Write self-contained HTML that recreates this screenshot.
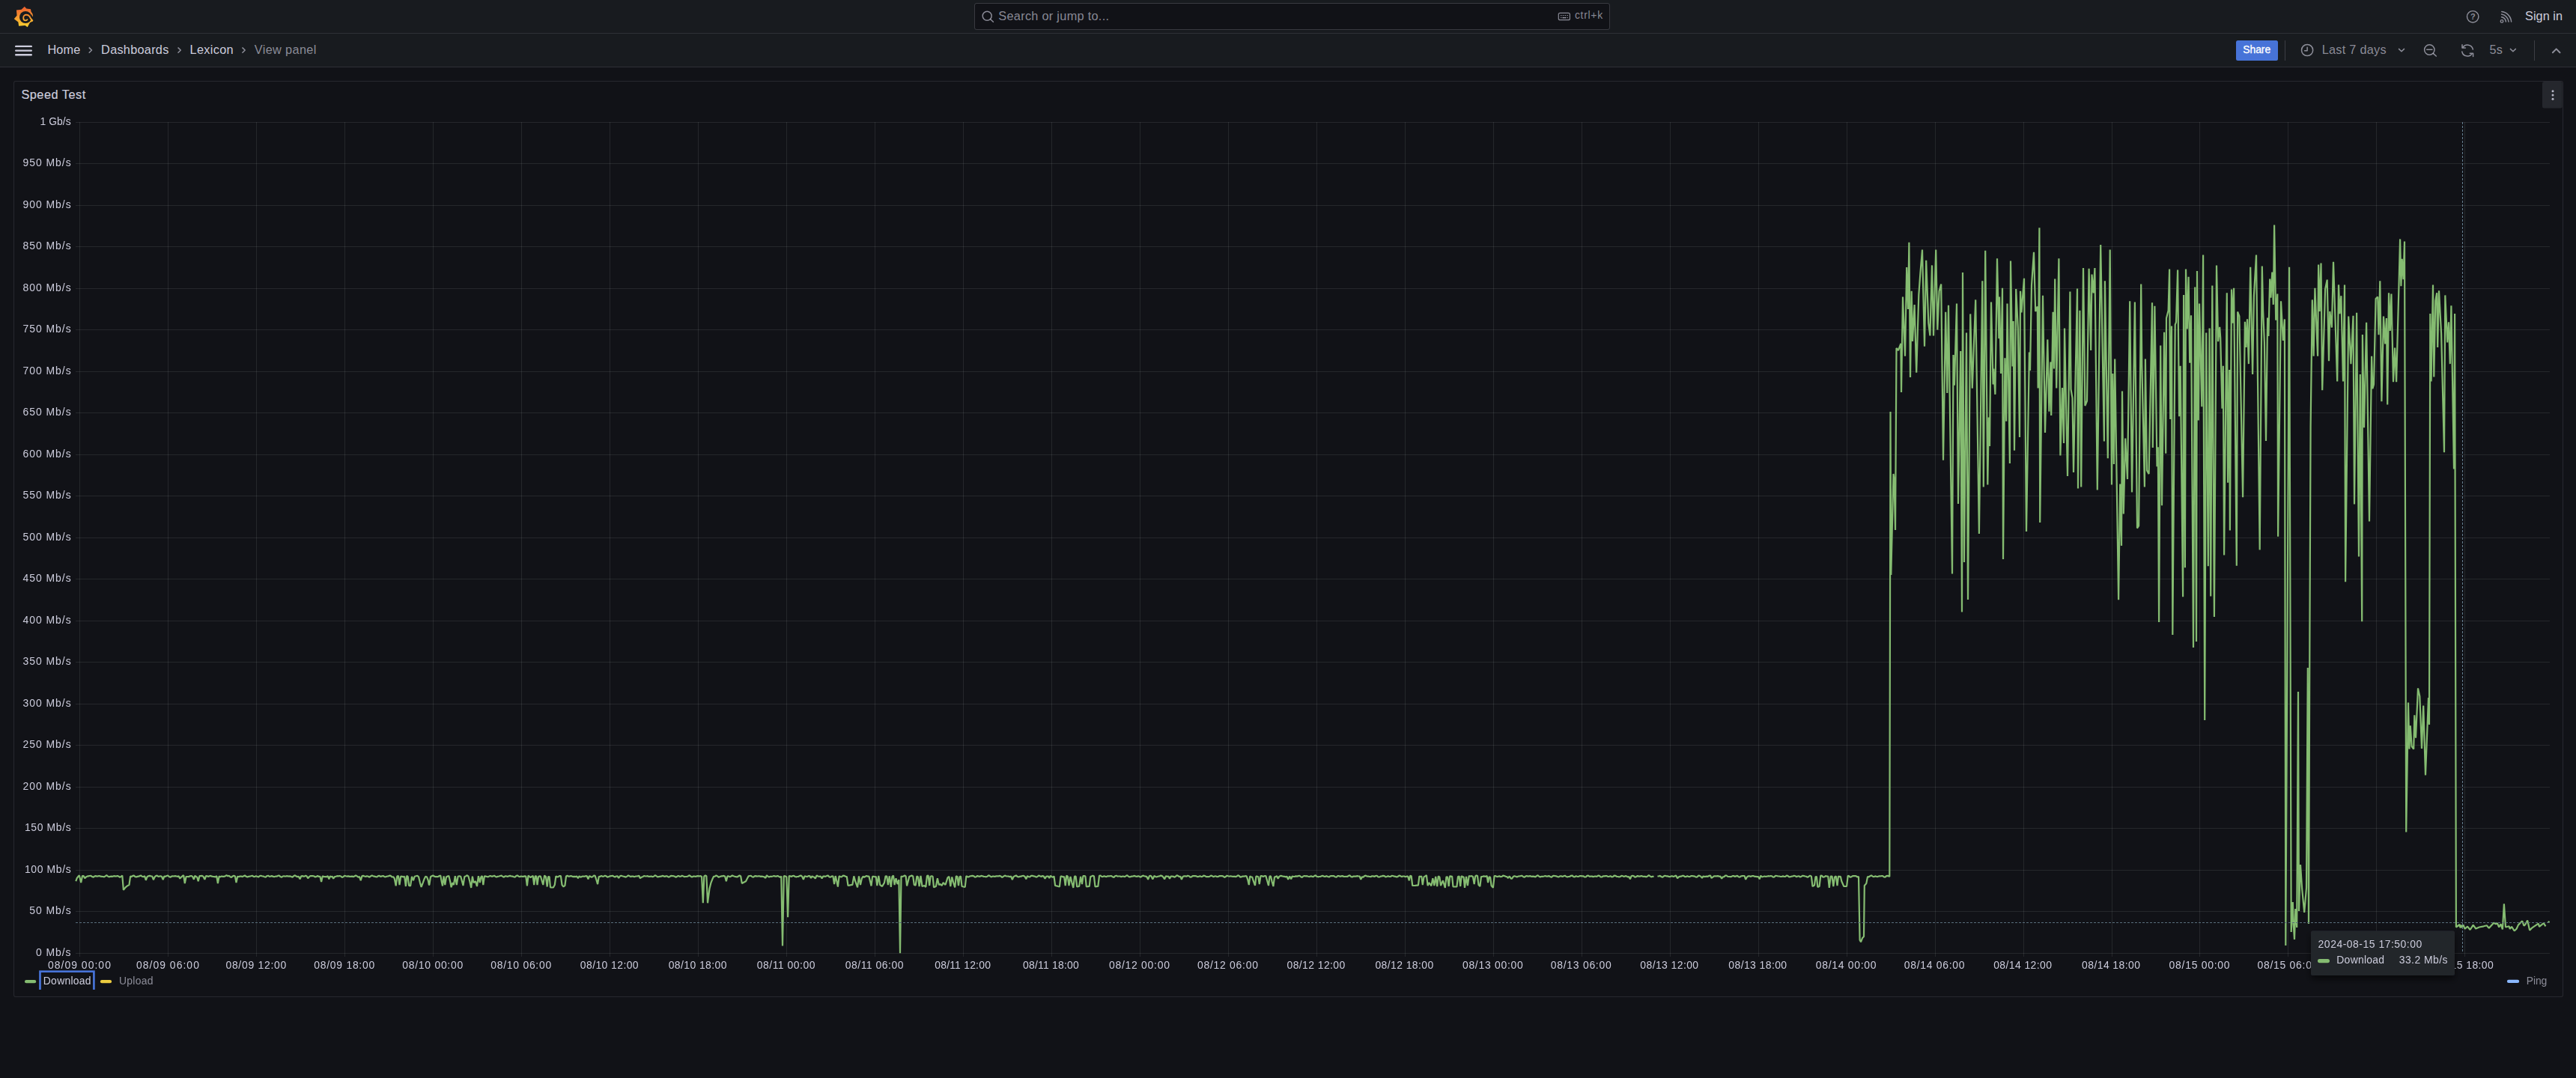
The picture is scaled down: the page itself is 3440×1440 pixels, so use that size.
<!DOCTYPE html>
<html lang="en">
<head>
<meta charset="utf-8">
<title>Lexicon - Dashboards - Grafana</title>
<style>
html,body{margin:0;padding:0}
body{width:3440px;height:1440px;overflow:hidden;background:#111217;position:relative;font-family:"Liberation Sans",sans-serif;color:rgb(204,204,220)}
header,nav{position:absolute;left:0;width:3440px;height:44px;background:#181b1f;border-bottom:1px solid rgba(204,204,220,0.12);box-sizing:content-box}
header{top:0}
nav{top:45px}
main{position:absolute;left:18px;top:108px;width:3403px;height:1222px;border:1px solid rgba(204,204,220,0.12);border-radius:3px;background:#111217}
svg{position:absolute;left:0;top:0}
svg text{font-family:"Liberation Sans",sans-serif;white-space:pre}
</style>
</head>
<body>
<header></header>
<nav></nav>
<main></main>
<svg width="3440" height="1440" viewBox="0 0 3440 1440">
<path d="M106.5 163V1278M224.5 163V1278M342.5 163V1278M460.5 163V1278M578.5 163V1278M696.5 163V1278M814.5 163V1278M932.5 163V1278M1050.5 163V1278M1168.5 163V1278M1286.5 163V1278M1404.5 163V1278M1522.5 163V1278M1640.5 163V1278M1758.5 163V1278M1876.5 163V1278M1994.5 163V1278M2112.5 163V1278M2230.5 163V1278M2348.5 163V1278M2466.5 163V1278M2584.5 163V1278M2702.5 163V1278M2820.5 163V1278M2937.5 163V1278M3055.5 163V1278M3173.5 163V1278M3291.5 163V1278" stroke="rgba(240,250,255,0.09)" stroke-width="1" fill="none" shape-rendering="crispEdges"/>
<path d="M101.0 163.5H3404.5M101.0 218.5H3404.5M101.0 274.5H3404.5M101.0 329.5H3404.5M101.0 385.5H3404.5M101.0 440.5H3404.5M101.0 496.5H3404.5M101.0 551.5H3404.5M101.0 607.5H3404.5M101.0 662.5H3404.5M101.0 718.5H3404.5M101.0 773.5H3404.5M101.0 829.5H3404.5M101.0 884.5H3404.5M101.0 940.5H3404.5M101.0 995.5H3404.5M101.0 1051.5H3404.5M101.0 1106.5H3404.5M101.0 1162.5H3404.5M101.0 1217.5H3404.5M101.0 1273.5H3404.5" stroke="rgba(240,250,255,0.09)" stroke-width="1" fill="none" shape-rendering="crispEdges"/>
<g class="ax" opacity="0.999"><text x="53.6" y="167.2" font-size="13.95" fill="rgb(204,204,220)" textLength="41.0" lengthAdjust="spacing">1 Gb/s</text><text x="30.6" y="222.2" font-size="13.95" fill="rgb(204,204,220)" textLength="64.0" lengthAdjust="spacing">950 Mb/s</text><text x="30.6" y="278.2" font-size="13.95" fill="rgb(204,204,220)" textLength="64.0" lengthAdjust="spacing">900 Mb/s</text><text x="30.6" y="333.2" font-size="13.95" fill="rgb(204,204,220)" textLength="64.0" lengthAdjust="spacing">850 Mb/s</text><text x="30.6" y="389.2" font-size="13.95" fill="rgb(204,204,220)" textLength="64.0" lengthAdjust="spacing">800 Mb/s</text><text x="30.6" y="444.2" font-size="13.95" fill="rgb(204,204,220)" textLength="64.0" lengthAdjust="spacing">750 Mb/s</text><text x="30.6" y="500.2" font-size="13.95" fill="rgb(204,204,220)" textLength="64.0" lengthAdjust="spacing">700 Mb/s</text><text x="30.6" y="555.2" font-size="13.95" fill="rgb(204,204,220)" textLength="64.0" lengthAdjust="spacing">650 Mb/s</text><text x="30.6" y="611.2" font-size="13.95" fill="rgb(204,204,220)" textLength="64.0" lengthAdjust="spacing">600 Mb/s</text><text x="30.6" y="666.2" font-size="13.95" fill="rgb(204,204,220)" textLength="64.0" lengthAdjust="spacing">550 Mb/s</text><text x="30.6" y="722.2" font-size="13.95" fill="rgb(204,204,220)" textLength="64.0" lengthAdjust="spacing">500 Mb/s</text><text x="30.6" y="777.2" font-size="13.95" fill="rgb(204,204,220)" textLength="64.0" lengthAdjust="spacing">450 Mb/s</text><text x="30.6" y="833.2" font-size="13.95" fill="rgb(204,204,220)" textLength="64.0" lengthAdjust="spacing">400 Mb/s</text><text x="30.6" y="888.2" font-size="13.95" fill="rgb(204,204,220)" textLength="64.0" lengthAdjust="spacing">350 Mb/s</text><text x="30.6" y="944.2" font-size="13.95" fill="rgb(204,204,220)" textLength="64.0" lengthAdjust="spacing">300 Mb/s</text><text x="30.6" y="999.2" font-size="13.95" fill="rgb(204,204,220)" textLength="64.0" lengthAdjust="spacing">250 Mb/s</text><text x="30.6" y="1055.2" font-size="13.95" fill="rgb(204,204,220)" textLength="64.0" lengthAdjust="spacing">200 Mb/s</text><text x="33.0" y="1110.2" font-size="13.95" fill="rgb(204,204,220)" textLength="61.6" lengthAdjust="spacing">150 Mb/s</text><text x="33.0" y="1166.2" font-size="13.95" fill="rgb(204,204,220)" textLength="61.6" lengthAdjust="spacing">100 Mb/s</text><text x="39.3" y="1221.2" font-size="13.95" fill="rgb(204,204,220)" textLength="55.3" lengthAdjust="spacing">50 Mb/s</text><text x="47.9" y="1277.2" font-size="13.95" fill="rgb(204,204,220)" textLength="46.6" lengthAdjust="spacing">0 Mb/s</text></g>
<g class="ax" opacity="0.999"><text x="63.9" y="1294.0" font-size="13.95" fill="rgb(204,204,220)" textLength="84.0" lengthAdjust="spacing">08/09 00:00</text><text x="181.9" y="1294.0" font-size="13.95" fill="rgb(204,204,220)" textLength="84.0" lengthAdjust="spacing">08/09 06:00</text><text x="301.4" y="1294.0" font-size="13.95" fill="rgb(204,204,220)" textLength="80.9" lengthAdjust="spacing">08/09 12:00</text><text x="419.3" y="1294.0" font-size="13.95" fill="rgb(204,204,220)" textLength="80.9" lengthAdjust="spacing">08/09 18:00</text><text x="537.3" y="1294.0" font-size="13.95" fill="rgb(204,204,220)" textLength="80.9" lengthAdjust="spacing">08/10 00:00</text><text x="655.3" y="1294.0" font-size="13.95" fill="rgb(204,204,220)" textLength="80.9" lengthAdjust="spacing">08/10 06:00</text><text x="774.8" y="1294.0" font-size="13.95" fill="rgb(204,204,220)" textLength="77.8" lengthAdjust="spacing">08/10 12:00</text><text x="892.7" y="1294.0" font-size="13.95" fill="rgb(204,204,220)" textLength="77.8" lengthAdjust="spacing">08/10 18:00</text><text x="1010.7" y="1294.0" font-size="13.95" fill="rgb(204,204,220)" textLength="77.8" lengthAdjust="spacing">08/11 00:00</text><text x="1128.7" y="1294.0" font-size="13.95" fill="rgb(204,204,220)" textLength="77.8" lengthAdjust="spacing">08/11 06:00</text><text x="1248.2" y="1294.0" font-size="13.95" fill="rgb(204,204,220)" textLength="74.7" lengthAdjust="spacing">08/11 12:00</text><text x="1366.1" y="1294.0" font-size="13.95" fill="rgb(204,204,220)" textLength="74.7" lengthAdjust="spacing">08/11 18:00</text><text x="1481.0" y="1294.0" font-size="13.95" fill="rgb(204,204,220)" textLength="80.9" lengthAdjust="spacing">08/12 00:00</text><text x="1599.0" y="1294.0" font-size="13.95" fill="rgb(204,204,220)" textLength="80.9" lengthAdjust="spacing">08/12 06:00</text><text x="1718.5" y="1294.0" font-size="13.95" fill="rgb(204,204,220)" textLength="77.8" lengthAdjust="spacing">08/12 12:00</text><text x="1836.4" y="1294.0" font-size="13.95" fill="rgb(204,204,220)" textLength="77.8" lengthAdjust="spacing">08/12 18:00</text><text x="1952.9" y="1294.0" font-size="13.95" fill="rgb(204,204,220)" textLength="80.9" lengthAdjust="spacing">08/13 00:00</text><text x="2070.8" y="1294.0" font-size="13.95" fill="rgb(204,204,220)" textLength="80.9" lengthAdjust="spacing">08/13 06:00</text><text x="2190.3" y="1294.0" font-size="13.95" fill="rgb(204,204,220)" textLength="77.8" lengthAdjust="spacing">08/13 12:00</text><text x="2308.3" y="1294.0" font-size="13.95" fill="rgb(204,204,220)" textLength="77.8" lengthAdjust="spacing">08/13 18:00</text><text x="2424.7" y="1294.0" font-size="13.95" fill="rgb(204,204,220)" textLength="80.9" lengthAdjust="spacing">08/14 00:00</text><text x="2542.7" y="1294.0" font-size="13.95" fill="rgb(204,204,220)" textLength="80.9" lengthAdjust="spacing">08/14 06:00</text><text x="2662.2" y="1294.0" font-size="13.95" fill="rgb(204,204,220)" textLength="77.8" lengthAdjust="spacing">08/14 12:00</text><text x="2780.1" y="1294.0" font-size="13.95" fill="rgb(204,204,220)" textLength="77.8" lengthAdjust="spacing">08/14 18:00</text><text x="2896.6" y="1294.0" font-size="13.95" fill="rgb(204,204,220)" textLength="80.9" lengthAdjust="spacing">08/15 00:00</text><text x="3014.5" y="1294.0" font-size="13.95" fill="rgb(204,204,220)" textLength="80.9" lengthAdjust="spacing">08/15 06:00</text><text x="3134.0" y="1294.0" font-size="13.95" fill="rgb(204,204,220)" textLength="77.8" lengthAdjust="spacing">08/15 12:00</text><text x="3252.0" y="1294.0" font-size="13.95" fill="rgb(204,204,220)" textLength="77.8" lengthAdjust="spacing">08/15 18:00</text></g>
<g fill="none" stroke="#85bc71" stroke-width="2.2" stroke-linejoin="bevel" stroke-linecap="butt"><path d="M101.3 1177.2 L102.8 1172.9 L104.4 1170.8 L105.9 1169.4 L108.2 1179.1 L110.0 1170.0 L111.6 1170.0 L113.3 1173.3 L114.9 1171.5 L116.5 1170.6 L118.1 1170.3 L119.7 1170.0 L121.4 1169.8 L123.0 1171.1 L124.6 1171.8 L126.2 1170.5 L127.8 1170.1 L129.4 1170.8 L131.0 1170.4 L132.7 1170.0 L134.3 1170.7 L135.9 1170.8 L137.5 1171.0 L139.1 1171.4 L140.7 1170.3 L142.3 1169.2 L143.9 1170.5 L145.6 1171.4 L147.2 1170.8 L148.8 1170.7 L150.4 1170.8 L152.0 1170.2 L153.6 1170.4 L155.2 1170.6 L156.9 1169.9 L158.5 1170.7 L160.1 1171.9 L161.7 1170.9 L163.3 1169.7 L164.9 1188.8 L167.6 1185.3 L170.0 1183.4 L172.5 1182.0 L174.1 1170.6 L175.7 1171.1 L177.3 1169.9 L178.9 1169.7 L180.5 1171.1 L182.1 1171.4 L183.7 1170.9 L185.2 1170.7 L186.8 1169.9 L188.4 1169.7 L190.0 1171.0 L191.6 1171.2 L193.2 1170.3 L194.8 1175.8 L196.5 1171.3 L198.2 1170.3 L199.9 1169.9 L201.5 1170.3 L203.2 1170.5 L204.9 1175.2 L206.5 1171.6 L208.1 1170.0 L209.7 1169.7 L211.3 1170.8 L212.9 1170.7 L214.5 1170.3 L216.1 1171.0 L217.7 1175.2 L219.3 1170.7 L221.0 1170.8 L222.6 1170.0 L224.2 1169.5 L225.8 1171.0 L227.5 1171.8 L229.1 1170.6 L230.7 1170.3 L232.3 1170.5 L233.9 1170.1 L235.6 1170.5 L237.2 1170.9 L238.8 1170.4 L240.4 1173.7 L242.0 1171.6 L243.6 1170.3 L245.2 1169.3 L246.8 1180.1 L248.6 1171.0 L250.3 1171.0 L252.0 1171.2 L253.7 1170.3 L255.4 1170.0 L257.1 1170.9 L258.9 1174.8 L260.3 1169.9 L261.8 1171.0 L263.2 1171.7 L264.7 1177.2 L266.4 1170.2 L268.2 1170.1 L269.9 1169.9 L271.7 1171.2 L273.4 1174.8 L275.0 1170.2 L276.6 1170.3 L278.2 1171.0 L279.8 1170.3 L281.4 1169.9 L283.0 1170.7 L284.5 1171.0 L286.1 1171.1 L287.7 1171.3 L289.3 1170.2 L290.9 1180.1 L292.6 1170.6 L294.2 1171.4 L295.9 1170.5 L297.5 1170.8 L299.2 1170.9 L300.9 1170.3 L302.5 1169.0 L304.2 1170.3 L305.8 1169.9 L307.4 1171.2 L309.0 1171.9 L310.7 1170.4 L312.3 1169.7 L313.9 1170.4 L315.5 1179.1 L317.2 1170.7 L318.8 1171.2 L320.4 1170.6 L322.1 1170.5 L323.7 1171.1 L325.4 1170.2 L327.0 1169.4 L328.6 1170.8 L330.3 1171.6 L331.9 1170.9 L333.5 1170.7 L335.2 1170.2 L336.8 1169.8 L338.4 1170.8 L340.1 1171.1 L341.7 1170.2 L343.3 1170.8 L345.0 1171.5 L346.6 1170.3 L348.2 1169.7 L349.9 1170.3 L351.5 1170.5 L353.1 1171.2 L354.8 1171.6 L356.4 1170.2 L358.1 1169.7 L359.7 1170.8 L361.3 1170.6 L363.0 1170.1 L364.6 1170.9 L366.2 1171.2 L367.9 1170.7 L369.5 1170.7 L371.1 1169.9 L372.8 1169.5 L374.4 1171.1 L376.0 1171.8 L377.7 1170.5 L379.3 1170.3 L380.9 1170.7 L382.6 1170.2 L384.2 1170.4 L385.8 1170.7 L387.5 1170.4 L389.1 1171.1 L390.7 1171.6 L392.4 1170.0 L394.0 1169.4 L395.7 1170.6 L397.3 1171.1 L398.9 1170.9 L400.6 1174.3 L402.1 1170.5 L403.6 1170.1 L405.1 1170.7 L406.7 1170.6 L408.2 1169.8 L409.7 1170.5 L411.2 1173.3 L412.9 1171.2 L414.5 1170.1 L416.1 1170.1 L417.7 1170.0 L419.4 1170.5 L421.0 1171.5 L422.6 1170.9 L424.2 1170.1 L425.8 1170.9 L427.5 1170.9 L429.1 1178.1 L430.8 1170.2 L432.5 1171.1 L434.2 1171.1 L435.9 1171.3 L437.7 1170.3 L439.4 1174.3 L440.8 1170.4 L442.3 1171.3 L443.7 1170.7 L445.2 1173.7 L446.9 1171.1 L448.5 1170.8 L450.2 1170.2 L451.8 1170.3 L453.5 1170.0 L455.2 1170.5 L456.8 1171.9 L458.5 1171.2 L460.1 1169.7 L461.8 1170.2 L463.4 1170.6 L465.1 1170.4 L466.8 1170.9 L468.4 1170.9 L470.1 1170.6 L471.7 1171.1 L473.4 1170.5 L475.1 1169.3 L476.7 1170.4 L478.4 1171.7 L480.0 1171.0 L481.7 1176.2 L483.4 1170.4 L485.0 1169.9 L486.7 1170.5 L488.4 1171.0 L490.0 1170.2 L491.7 1170.8 L493.4 1171.7 L495.0 1170.4 L496.7 1169.6 L498.4 1170.3 L500.0 1170.6 L501.7 1171.2 L503.4 1171.5 L505.0 1170.2 L506.7 1169.9 L508.4 1171.0 L510.0 1170.4 L511.7 1170.0 L513.4 1171.1 L515.0 1171.3 L516.7 1170.7 L518.4 1170.5 L520.1 1169.7 L521.7 1169.9 L523.4 1171.5 L525.1 1171.3 L526.7 1173.3 L528.7 1183.4 L530.3 1170.6 L531.9 1170.0 L533.5 1182.0 L535.2 1170.6 L536.9 1170.8 L538.5 1171.6 L540.2 1170.8 L541.9 1184.0 L543.3 1169.9 L544.7 1171.0 L546.1 1183.0 L548.1 1183.4 L550.0 1170.9 L552.0 1176.2 L553.7 1170.7 L555.5 1170.3 L557.3 1169.8 L559.1 1171.4 L560.9 1179.1 L562.6 1184.9 L564.8 1179.1 L566.5 1174.3 L568.3 1170.7 L570.0 1171.4 L571.8 1176.2 L572.9 1182.0 L573.3 1182.0 L575.0 1171.3 L576.6 1170.3 L578.3 1169.5 L580.0 1170.6 L581.7 1171.2 L583.3 1171.1 L585.0 1171.1 L586.7 1170.0 L588.3 1169.7 L590.0 1179.1 L591.0 1183.4 L592.6 1170.4 L594.3 1182.0 L596.0 1171.4 L597.7 1170.6 L599.4 1170.1 L601.1 1177.2 L602.6 1185.3 L604.4 1179.1 L605.9 1182.0 L607.8 1170.2 L609.8 1182.0 L611.6 1170.8 L613.4 1170.2 L615.2 1170.7 L617.0 1177.2 L618.5 1183.0 L620.3 1171.1 L622.0 1170.4 L623.8 1169.3 L625.5 1170.7 L627.3 1177.2 L629.2 1185.9 L630.9 1170.6 L632.5 1179.1 L635.0 1177.2 L637.0 1184.0 L638.9 1170.2 L640.8 1179.1 L642.3 1171.6 L643.8 1170.1 L645.3 1182.0 L646.9 1170.4 L648.6 1170.7 L650.2 1171.0 L651.8 1171.4 L653.5 1170.4 L655.1 1170.0 L656.7 1170.9 L658.3 1170.4 L660.0 1169.7 L661.6 1170.9 L663.2 1171.6 L664.8 1170.8 L666.5 1170.5 L668.1 1170.0 L669.7 1169.7 L671.4 1171.0 L673.0 1171.6 L674.6 1170.4 L676.2 1170.4 L677.9 1171.1 L679.5 1170.3 L681.1 1169.9 L682.8 1170.5 L684.4 1170.6 L686.0 1171.2 L687.6 1171.6 L689.3 1170.1 L690.9 1169.4 L692.5 1170.7 L694.2 1171.1 L695.8 1170.5 L697.4 1170.9 L699.0 1170.9 L700.7 1170.4 L702.3 1170.6 L703.9 1183.4 L705.5 1169.7 L707.0 1170.9 L708.6 1172.0 L710.1 1170.9 L711.7 1170.0 L713.2 1182.0 L714.7 1170.3 L716.1 1170.3 L717.5 1182.0 L719.0 1171.1 L720.4 1170.4 L721.9 1170.6 L723.3 1175.2 L725.3 1182.0 L727.1 1169.5 L728.9 1171.0 L730.7 1184.5 L732.1 1171.0 L733.6 1171.0 L735.0 1185.5 L736.9 1185.5 L738.9 1185.5 L740.8 1182.0 L742.4 1170.3 L744.0 1171.5 L745.7 1171.1 L747.3 1170.0 L748.9 1170.1 L750.5 1182.0 L752.5 1184.5 L754.4 1183.0 L756.0 1170.6 L757.6 1169.8 L759.2 1170.7 L760.7 1170.7 L762.3 1170.0 L763.9 1170.6 L765.5 1171.1 L767.1 1170.9 L768.7 1171.1 L770.3 1170.5 L771.9 1173.3 L773.6 1170.2 L775.3 1171.7 L777.0 1170.9 L778.7 1170.5 L780.4 1170.8 L782.1 1170.2 L783.8 1170.3 L785.5 1174.3 L787.0 1170.2 L788.5 1170.8 L790.0 1171.8 L791.6 1171.0 L793.1 1169.5 L794.6 1169.9 L796.1 1174.3 L798.1 1181.1 L799.7 1171.2 L801.4 1170.9 L803.0 1170.1 L804.7 1170.8 L806.3 1170.7 L808.0 1169.6 L809.7 1170.5 L811.3 1171.7 L813.0 1171.0 L814.6 1170.4 L816.3 1170.2 L817.9 1169.7 L819.6 1170.7 L821.2 1171.5 L822.9 1170.5 L824.6 1170.4 L826.2 1172.9 L827.8 1170.5 L829.4 1169.7 L831.0 1170.3 L832.6 1170.7 L834.2 1171.1 L835.8 1171.6 L837.4 1170.6 L839.0 1169.4 L840.6 1170.3 L842.2 1171.1 L843.8 1170.5 L845.4 1170.6 L847.0 1171.2 L848.6 1170.7 L850.2 1170.5 L851.7 1170.4 L853.3 1169.7 L854.9 1173.3 L856.6 1171.8 L858.2 1171.3 L859.9 1170.0 L861.5 1170.3 L863.2 1170.5 L864.8 1170.2 L866.4 1170.9 L868.1 1170.8 L869.7 1170.5 L871.4 1171.3 L873.0 1170.8 L874.7 1169.3 L876.3 1170.0 L878.0 1171.3 L879.6 1171.1 L881.2 1170.9 L882.9 1170.7 L884.5 1169.9 L886.2 1170.4 L887.8 1171.0 L889.5 1170.2 L891.1 1170.5 L892.8 1171.7 L894.4 1171.0 L896.0 1169.9 L897.7 1170.1 L899.3 1170.2 L901.0 1170.8 L902.6 1171.7 L904.3 1170.8 L905.9 1169.9 L907.6 1170.8 L909.2 1170.7 L910.8 1169.8 L912.5 1170.5 L914.1 1171.2 L915.8 1171.0 L917.4 1171.0 L919.1 1170.3 L920.7 1169.3 L922.3 1170.5 L924.0 1171.6 L925.6 1170.7 L927.3 1170.5 L928.9 1171.0 L930.6 1170.4 L932.2 1170.2 L933.9 1170.5 L935.5 1170.2 L937.1 1171.0 L938.8 1206.3 L940.3 1170.6 L941.9 1169.4 L943.4 1170.2 L945.0 1206.3 L947.5 1186.9 L949.5 1179.1 L951.4 1174.3 L953.1 1170.8 L954.8 1170.6 L956.4 1169.5 L958.1 1170.4 L959.8 1171.8 L961.5 1171.1 L963.1 1170.4 L964.8 1170.3 L966.5 1169.9 L968.2 1170.7 L969.8 1177.2 L971.5 1170.4 L973.1 1170.5 L974.7 1171.4 L976.3 1170.5 L977.9 1169.5 L979.5 1170.3 L981.1 1170.8 L982.7 1171.1 L984.4 1171.5 L986.0 1170.5 L987.6 1169.5 L989.2 1170.5 L990.8 1180.1 L993.1 1178.7 L996.0 1177.2 L998.0 1173.3 L999.6 1170.4 L1001.2 1170.0 L1002.8 1169.8 L1004.5 1171.3 L1006.1 1171.8 L1007.7 1170.3 L1009.3 1170.1 L1010.9 1170.7 L1012.5 1170.3 L1014.2 1170.3 L1015.8 1170.9 L1017.4 1170.7 L1019.0 1171.0 L1020.6 1171.4 L1022.3 1172.9 L1023.9 1169.3 L1025.5 1170.7 L1027.1 1171.4 L1028.7 1170.8 L1030.4 1170.9 L1032.0 1170.5 L1033.6 1170.0 L1035.2 1170.6 L1036.9 1170.6 L1038.5 1170.0 L1040.1 1170.9 L1041.7 1171.8 L1043.3 1170.6 L1045.0 1263.5 L1046.8 1170.2 L1048.6 1170.4 L1050.3 1171.2 L1052.1 1225.3 L1053.7 1170.1 L1055.3 1170.4 L1056.9 1171.0 L1058.5 1170.0 L1060.1 1169.8 L1061.7 1171.0 L1063.3 1171.3 L1064.9 1171.0 L1066.5 1170.8 L1068.1 1169.9 L1069.7 1169.6 L1071.3 1171.0 L1072.9 1174.8 L1074.6 1170.3 L1076.3 1170.7 L1078.0 1171.1 L1079.6 1170.2 L1081.3 1170.1 L1083.0 1172.9 L1084.5 1170.4 L1085.9 1171.2 L1087.4 1171.8 L1088.8 1173.7 L1090.6 1169.4 L1092.3 1170.5 L1094.1 1170.8 L1095.8 1170.5 L1097.6 1173.3 L1099.2 1170.7 L1100.9 1170.6 L1102.5 1170.9 L1104.2 1169.9 L1105.8 1169.6 L1107.5 1171.4 L1109.1 1171.7 L1110.8 1170.5 L1112.4 1170.3 L1114.1 1181.1 L1115.7 1170.1 L1117.4 1177.2 L1118.9 1184.5 L1120.6 1170.3 L1122.3 1171.2 L1124.0 1171.3 L1125.7 1169.7 L1127.4 1169.8 L1129.1 1170.8 L1130.8 1171.0 L1132.5 1183.0 L1134.4 1182.6 L1136.4 1182.2 L1138.3 1182.0 L1140.3 1170.4 L1142.2 1177.2 L1145.1 1185.3 L1147.0 1170.4 L1149.0 1182.0 L1150.9 1173.3 L1152.5 1170.8 L1154.1 1171.8 L1155.7 1170.8 L1157.3 1170.0 L1158.8 1170.7 L1160.4 1170.6 L1162.0 1177.2 L1163.5 1183.4 L1165.1 1170.9 L1166.7 1170.8 L1168.2 1171.3 L1169.8 1171.0 L1171.3 1183.0 L1173.3 1169.9 L1175.2 1182.0 L1178.1 1184.0 L1181.0 1179.1 L1182.6 1170.2 L1184.3 1170.6 L1185.9 1182.0 L1187.8 1170.3 L1189.8 1184.9 L1191.4 1171.1 L1193.0 1169.7 L1194.6 1182.0 L1196.5 1173.3 L1198.5 1181.1 L1200.4 1175.2 L1202.0 1273.3 L1203.5 1170.4 L1205.0 1171.1 L1206.5 1170.4 L1208.1 1169.5 L1209.6 1170.5 L1211.1 1183.4 L1212.7 1177.2 L1214.3 1170.8 L1215.9 1170.4 L1217.5 1169.6 L1219.2 1170.4 L1220.8 1182.0 L1222.7 1182.6 L1224.4 1170.5 L1226.0 1171.4 L1227.6 1184.0 L1229.5 1169.9 L1231.5 1184.0 L1234.4 1183.0 L1236.3 1184.9 L1238.0 1169.9 L1239.6 1169.7 L1241.2 1183.0 L1242.6 1170.7 L1244.1 1170.3 L1245.6 1170.8 L1247.0 1185.3 L1249.9 1184.0 L1251.9 1173.3 L1253.8 1182.0 L1255.7 1181.1 L1257.7 1183.0 L1259.6 1179.1 L1262.5 1182.0 L1265.5 1172.3 L1267.4 1170.8 L1269.3 1184.0 L1271.3 1171.5 L1273.2 1179.1 L1275.2 1185.3 L1276.8 1170.4 L1278.4 1171.0 L1280.0 1183.0 L1281.5 1171.2 L1283.0 1170.6 L1284.5 1184.0 L1286.6 1184.5 L1288.7 1184.9 L1290.4 1170.0 L1292.1 1171.4 L1293.7 1171.4 L1295.4 1170.3 L1297.0 1170.2 L1298.7 1169.9 L1300.4 1170.3 L1302.0 1171.6 L1303.7 1171.2 L1305.3 1170.0 L1307.0 1170.7 L1308.7 1170.8 L1310.3 1169.9 L1312.0 1170.3 L1313.6 1170.9 L1315.3 1171.0 L1317.0 1171.3 L1318.6 1170.7 L1320.3 1169.3 L1321.9 1170.2 L1323.6 1171.4 L1325.3 1170.7 L1326.9 1170.6 L1328.6 1171.0 L1330.2 1170.4 L1331.9 1170.3 L1333.6 1170.4 L1335.2 1169.9 L1336.9 1170.8 L1338.5 1172.0 L1340.2 1170.7 L1341.9 1169.6 L1343.5 1170.3 L1345.2 1170.5 L1346.8 1170.6 L1348.5 1171.2 L1350.2 1170.6 L1351.8 1175.2 L1353.5 1171.1 L1355.2 1170.2 L1356.9 1169.4 L1358.5 1170.9 L1360.2 1171.5 L1361.9 1170.9 L1363.6 1170.7 L1365.2 1170.0 L1366.9 1169.9 L1368.6 1171.0 L1370.3 1174.3 L1371.9 1170.2 L1373.6 1171.2 L1375.3 1171.3 L1377.0 1169.9 L1378.7 1169.9 L1380.4 1170.4 L1382.0 1170.7 L1383.7 1171.6 L1385.4 1171.0 L1387.1 1169.6 L1388.8 1170.3 L1390.5 1170.9 L1392.1 1170.1 L1393.8 1170.6 L1395.5 1173.7 L1397.0 1170.9 L1398.4 1170.7 L1399.9 1170.6 L1401.3 1172.9 L1402.9 1169.7 L1404.4 1171.3 L1406.0 1171.7 L1407.5 1170.5 L1409.1 1183.0 L1411.0 1183.4 L1413.0 1184.0 L1414.9 1184.5 L1416.5 1170.6 L1418.0 1170.6 L1419.6 1171.5 L1421.1 1171.2 L1422.7 1183.0 L1424.3 1169.6 L1425.9 1170.9 L1427.5 1183.0 L1429.5 1171.0 L1431.4 1179.1 L1433.3 1185.9 L1435.0 1170.7 L1436.6 1170.6 L1438.2 1184.5 L1441.1 1184.0 L1443.1 1170.9 L1445.0 1181.1 L1446.4 1170.1 L1447.9 1170.0 L1449.4 1170.6 L1450.8 1184.5 L1452.8 1184.2 L1454.7 1184.0 L1456.2 1171.1 L1457.8 1170.5 L1459.4 1169.6 L1460.9 1170.4 L1462.5 1184.5 L1464.4 1184.2 L1466.3 1184.0 L1468.0 1169.9 L1469.6 1169.5 L1471.2 1171.0 L1472.8 1171.1 L1474.5 1170.3 L1476.1 1170.9 L1477.7 1171.1 L1479.3 1170.3 L1481.0 1170.3 L1482.6 1170.2 L1484.2 1170.0 L1485.8 1171.3 L1487.5 1171.9 L1489.1 1170.3 L1490.7 1169.7 L1492.3 1170.6 L1493.9 1170.5 L1495.6 1170.5 L1497.2 1171.1 L1498.8 1170.7 L1500.4 1170.7 L1502.1 1171.1 L1503.7 1170.1 L1505.3 1169.3 L1506.9 1170.8 L1508.6 1171.6 L1510.2 1170.9 L1511.8 1170.6 L1513.4 1170.4 L1515.1 1169.9 L1516.7 1170.7 L1518.3 1171.0 L1519.9 1170.2 L1521.5 1170.8 L1523.2 1171.7 L1524.8 1170.5 L1526.4 1169.6 L1528.0 1170.2 L1529.7 1170.6 L1531.3 1171.1 L1532.9 1174.3 L1533.3 1174.3 L1534.8 1170.3 L1536.2 1169.8 L1537.7 1170.7 L1539.1 1174.3 L1539.7 1173.7 L1541.4 1169.9 L1543.2 1171.1 L1544.9 1171.3 L1546.6 1170.7 L1548.3 1170.5 L1550.1 1169.6 L1551.8 1170.1 L1553.5 1171.7 L1555.2 1174.3 L1556.9 1170.2 L1558.6 1170.8 L1560.3 1170.5 L1562.0 1173.7 L1563.6 1170.5 L1565.2 1170.6 L1566.8 1170.8 L1568.4 1171.7 L1570.0 1170.8 L1571.6 1169.3 L1573.2 1170.0 L1574.8 1171.1 L1576.4 1170.8 L1577.9 1174.8 L1579.6 1171.0 L1581.2 1170.4 L1582.8 1170.4 L1584.5 1170.7 L1586.1 1169.8 L1587.8 1170.2 L1589.4 1171.8 L1591.0 1171.4 L1592.7 1170.1 L1594.3 1170.1 L1595.9 1170.2 L1597.6 1170.4 L1599.2 1171.3 L1600.8 1170.9 L1602.5 1170.2 L1604.1 1171.1 L1605.7 1170.9 L1607.4 1169.6 L1609.0 1170.0 L1610.7 1171.1 L1612.3 1171.1 L1613.9 1171.2 L1615.6 1170.7 L1617.2 1169.6 L1618.8 1170.2 L1620.5 1171.3 L1622.1 1170.5 L1623.7 1170.4 L1625.4 1171.3 L1627.0 1170.9 L1628.6 1170.1 L1630.3 1170.2 L1631.9 1170.0 L1633.5 1170.6 L1635.2 1171.9 L1636.8 1171.1 L1638.5 1169.7 L1640.1 1170.3 L1641.7 1170.7 L1643.4 1170.2 L1645.0 1170.7 L1646.6 1171.0 L1648.3 1170.7 L1649.9 1171.1 L1651.5 1170.6 L1653.2 1169.3 L1654.8 1170.1 L1656.4 1171.6 L1658.1 1171.1 L1659.7 1170.5 L1661.4 1170.6 L1663.0 1170.2 L1664.6 1170.3 L1666.3 1175.2 L1667.8 1182.0 L1669.3 1170.3 L1670.7 1171.5 L1672.2 1171.6 L1673.6 1176.2 L1676.0 1183.0 L1677.4 1170.6 L1678.9 1170.7 L1680.3 1171.2 L1681.8 1181.1 L1683.5 1170.2 L1685.2 1170.2 L1686.9 1171.0 L1688.6 1170.1 L1690.4 1170.0 L1692.1 1176.2 L1694.0 1183.0 L1695.5 1170.6 L1697.0 1170.4 L1698.5 1177.2 L1700.4 1184.0 L1702.0 1171.6 L1703.5 1171.1 L1705.1 1170.2 L1706.6 1173.7 L1708.3 1170.9 L1710.0 1169.9 L1711.7 1170.2 L1713.4 1170.6 L1715.1 1170.8 L1716.8 1171.6 L1718.5 1170.8 L1720.2 1174.8 L1722.2 1170.5 L1724.1 1174.3 L1725.7 1170.5 L1727.4 1171.0 L1729.0 1170.9 L1730.6 1170.4 L1732.3 1170.6 L1733.9 1170.1 L1735.5 1169.7 L1737.2 1171.2 L1738.8 1171.9 L1740.4 1170.5 L1742.1 1170.0 L1743.7 1170.4 L1745.3 1170.2 L1747.0 1170.7 L1748.6 1171.1 L1750.3 1170.4 L1751.9 1170.7 L1753.5 1171.3 L1755.2 1170.0 L1756.8 1169.4 L1758.4 1170.8 L1760.1 1171.3 L1761.7 1171.0 L1763.3 1171.0 L1765.0 1170.1 L1766.6 1169.8 L1768.2 1170.9 L1769.9 1170.9 L1771.5 1170.1 L1773.1 1171.0 L1774.8 1171.5 L1776.4 1170.4 L1778.0 1170.0 L1779.7 1170.1 L1781.3 1170.2 L1782.9 1171.3 L1784.6 1171.7 L1786.2 1170.2 L1787.8 1170.0 L1789.5 1170.9 L1791.1 1170.4 L1792.7 1170.1 L1794.4 1170.9 L1796.0 1171.0 L1797.7 1170.9 L1799.3 1171.0 L1800.9 1169.8 L1802.6 1169.4 L1804.2 1171.1 L1805.8 1171.5 L1807.5 1170.5 L1809.1 1170.6 L1810.7 1170.7 L1812.4 1170.1 L1814.0 1170.5 L1815.6 1170.5 L1817.3 1174.8 L1818.9 1171.3 L1820.6 1171.7 L1822.2 1170.0 L1823.9 1169.6 L1825.5 1170.6 L1827.2 1170.7 L1828.8 1171.0 L1830.5 1171.2 L1832.1 1170.3 L1833.8 1170.4 L1835.4 1171.0 L1837.1 1170.0 L1838.7 1169.8 L1840.4 1171.4 L1842.1 1171.5 L1843.7 1170.6 L1845.4 1170.4 L1847.0 1169.9 L1848.7 1170.1 L1850.3 1171.4 L1852.0 1171.0 L1853.6 1170.2 L1855.3 1171.0 L1856.9 1171.0 L1858.6 1169.8 L1860.2 1170.0 L1861.9 1170.7 L1863.5 1170.9 L1865.2 1171.5 L1866.8 1170.9 L1868.5 1169.5 L1870.1 1170.1 L1871.8 1171.1 L1873.4 1170.5 L1875.1 1170.5 L1876.8 1171.2 L1878.4 1170.7 L1880.1 1170.5 L1881.7 1176.2 L1883.2 1169.7 L1884.7 1170.2 L1886.2 1183.0 L1888.1 1183.0 L1890.1 1182.8 L1892.0 1182.6 L1893.9 1182.6 L1895.4 1170.5 L1896.8 1171.0 L1898.3 1170.7 L1899.8 1182.0 L1901.5 1171.4 L1903.2 1170.5 L1904.9 1169.2 L1906.6 1183.0 L1908.5 1179.1 L1911.4 1183.4 L1913.3 1173.3 L1915.3 1183.0 L1917.2 1171.0 L1919.2 1184.0 L1920.8 1170.3 L1922.4 1171.6 L1924.0 1183.0 L1926.9 1176.2 L1929.8 1185.9 L1931.5 1171.2 L1933.1 1171.6 L1934.7 1184.0 L1936.2 1170.0 L1937.6 1170.9 L1939.1 1170.7 L1940.5 1184.5 L1942.5 1184.5 L1945.4 1184.5 L1947.0 1171.0 L1948.6 1170.5 L1950.2 1184.0 L1951.7 1170.0 L1953.1 1171.5 L1954.6 1171.3 L1956.0 1185.9 L1958.0 1170.8 L1959.9 1183.0 L1961.7 1170.1 L1963.4 1170.5 L1965.2 1170.2 L1966.9 1171.0 L1968.7 1181.1 L1970.1 1170.6 L1971.6 1169.4 L1973.0 1170.0 L1974.5 1182.0 L1976.4 1184.0 L1978.0 1171.0 L1979.5 1171.0 L1981.0 1170.4 L1982.5 1170.6 L1984.1 1170.9 L1985.6 1169.9 L1987.1 1179.1 L1988.6 1171.2 L1990.1 1171.8 L1991.6 1183.0 L1993.9 1185.9 L1995.6 1170.0 L1997.2 1170.1 L1998.9 1171.2 L2000.6 1170.9 L2002.2 1170.2 L2003.9 1171.2 L2005.6 1171.0 L2007.2 1169.6 L2008.9 1170.0 L2010.6 1170.8 L2012.2 1171.0 L2013.9 1172.9 L2015.8 1170.5 L2017.8 1173.7 L2019.1 1173.7 L2020.8 1171.0 L2022.4 1170.2 L2024.1 1170.7 L2025.7 1171.4 L2027.3 1170.7 L2029.0 1170.4 L2030.6 1170.1 L2032.3 1169.7 L2033.9 1171.0 L2035.6 1171.9 L2037.2 1170.6 L2038.9 1170.0 L2040.5 1170.7 L2042.1 1170.4 L2043.8 1170.2 L2045.4 1170.9 L2047.1 1170.7 L2048.7 1170.9 L2050.4 1171.4 L2052.0 1170.1 L2053.6 1169.2 L2055.3 1170.7 L2056.9 1171.4 L2058.6 1170.8 L2060.2 1170.9 L2061.9 1170.5 L2063.5 1170.0 L2065.2 1170.7 L2066.8 1170.6 L2068.4 1170.0 L2070.1 1171.1 L2071.7 1171.8 L2073.4 1170.4 L2075.0 1169.8 L2076.7 1170.2 L2078.3 1170.4 L2079.9 1171.1 L2081.6 1171.4 L2083.2 1170.3 L2084.9 1170.3 L2086.5 1171.1 L2088.2 1170.2 L2089.8 1169.7 L2091.5 1171.0 L2093.1 1171.3 L2094.7 1171.0 L2096.4 1170.8 L2098.0 1169.8 L2099.7 1169.6 L2101.3 1171.2 L2103.0 1171.3 L2104.6 1170.3 L2106.2 1170.8 L2107.9 1171.0 L2109.5 1170.1 L2111.2 1170.1 L2112.8 1170.4 L2114.5 1170.4 L2116.1 1171.5 L2117.8 1171.5 L2119.4 1169.8 L2121.0 1169.7 L2122.7 1170.8 L2124.3 1170.6 L2126.0 1170.6 L2127.6 1171.1 L2129.3 1170.7 L2130.9 1170.6 L2132.5 1170.8 L2134.2 1169.7 L2135.8 1169.8 L2137.5 1171.5 L2139.1 1171.5 L2140.8 1170.4 L2142.4 1170.4 L2144.1 1170.2 L2145.7 1170.1 L2147.3 1171.0 L2149.0 1170.8 L2150.6 1170.3 L2152.3 1171.3 L2153.9 1171.2 L2155.6 1169.6 L2157.2 1169.8 L2158.8 1170.8 L2160.5 1171.0 L2162.1 1171.3 L2163.8 1171.0 L2165.4 1169.8 L2167.1 1170.2 L2168.7 1171.1 L2170.4 1170.2 L2172.0 1170.3 L2173.6 1171.4 L2175.3 1171.1 L2176.9 1174.3 L2178.6 1170.2 L2180.2 1169.8 L2181.9 1170.4 L2183.6 1171.8 L2185.2 1171.0 L2186.9 1170.0 L2188.5 1170.7 L2190.2 1170.6 L2191.9 1170.0 L2193.5 1170.6 L2195.2 1170.9 L2196.8 1170.9 L2198.5 1171.4 L2200.2 1170.5 L2201.8 1169.2 L2203.5 1170.4 L2205.1 1171.4 L2206.8 1170.8 L2208.5 1170.8"/><path d="M2213.4 1170.5 L2215.1 1170.5 L2216.8 1169.9 L2218.4 1171.0 L2220.1 1171.9 L2221.7 1170.5 L2223.4 1169.7 L2225.1 1170.3 L2226.7 1170.4 L2228.4 1170.9 L2230.0 1171.3 L2231.7 1170.4 L2233.4 1170.4 L2235.0 1171.1 L2236.7 1170.1 L2238.3 1169.6 L2240.0 1173.3 L2241.7 1171.4 L2243.3 1170.9 L2245.0 1170.7 L2246.6 1169.9 L2248.3 1169.8 L2249.9 1171.2 L2251.6 1171.1 L2253.2 1170.2 L2254.9 1171.0 L2256.5 1171.2 L2258.2 1170.1 L2259.8 1170.0 L2261.5 1170.3 L2263.1 1170.6 L2264.8 1171.6 L2266.4 1171.4 L2268.1 1169.7 L2269.7 1169.9 L2271.4 1170.9 L2273.0 1172.9 L2274.6 1170.4 L2276.2 1171.1 L2277.7 1170.9 L2279.3 1170.7 L2280.9 1170.8 L2282.5 1169.8 L2284.0 1169.6 L2285.6 1172.9 L2287.3 1171.7 L2289.0 1170.4 L2290.7 1170.4 L2292.4 1170.4 L2294.1 1170.1 L2295.8 1170.8 L2297.5 1170.7 L2299.2 1173.7 L2300.8 1171.4 L2302.4 1171.2 L2304.0 1169.6 L2305.6 1169.7 L2307.2 1170.8 L2308.8 1171.0 L2310.4 1171.1 L2312.0 1171.1 L2313.6 1170.1 L2315.2 1170.1 L2316.8 1170.9 L2318.4 1170.4 L2320.0 1169.9 L2321.6 1171.2 L2323.2 1171.6 L2324.8 1170.5 L2326.4 1170.2 L2328.0 1170.0 L2329.6 1170.0 L2331.2 1174.8 L2332.9 1171.6 L2334.6 1170.3 L2336.3 1170.3 L2337.9 1171.0 L2339.6 1170.1 L2341.3 1170.0 L2343.0 1170.8 L2344.6 1170.9 L2346.3 1171.2 L2348.0 1171.0 L2349.7 1174.3 L2351.3 1169.7 L2353.0 1171.3 L2354.6 1171.0 L2356.3 1170.5 L2357.9 1171.0 L2359.6 1170.7 L2361.2 1170.2 L2362.9 1170.5 L2364.5 1170.0 L2366.1 1170.3 L2367.8 1171.8 L2369.4 1171.4 L2371.1 1169.8 L2372.7 1170.0 L2374.4 1170.5 L2376.0 1170.5 L2377.7 1171.0 L2379.3 1171.0 L2381.0 1170.4 L2382.6 1171.0 L2384.3 1170.8 L2385.9 1169.5 L2387.6 1170.1 L2389.2 1171.5 L2390.9 1171.2 L2392.5 1170.7 L2394.2 1170.5 L2395.8 1169.8 L2397.5 1170.3 L2399.1 1171.2 L2400.7 1170.5 L2402.4 1170.4 L2404.0 1171.5 L2405.7 1170.8 L2407.3 1169.7 L2409.0 1170.1 L2410.6 1170.5 L2412.3 1170.9 L2413.9 1171.7 L2415.6 1170.7 L2417.2 1169.6 L2418.9 1170.6 L2420.5 1184.0 L2423.0 1182.6 L2424.5 1171.1 L2425.9 1171.2 L2427.3 1184.9 L2429.6 1184.0 L2431.3 1169.6 L2432.9 1169.9 L2434.6 1171.6 L2436.2 1171.4 L2437.9 1170.2 L2439.5 1170.5 L2441.2 1170.5 L2442.8 1185.9 L2444.7 1170.7 L2446.5 1170.5 L2448.3 1184.0 L2450.0 1171.7 L2451.8 1170.3 L2453.5 1183.0 L2455.0 1170.4 L2456.4 1171.1 L2457.9 1170.9 L2459.3 1177.2 L2462.3 1184.0 L2464.2 1184.0 L2466.1 1184.0 L2467.7 1169.8 L2469.3 1170.4 L2470.9 1171.8 L2472.5 1171.2 L2474.1 1170.1 L2475.7 1170.1 L2477.3 1170.0 L2478.8 1170.4 L2480.4 1171.5 L2482.0 1171.1 L2483.6 1255.8 L2485.0 1258.3 L2487.1 1252.9 L2489.0 1250.9 L2489.8 1183.0 L2492.3 1180.1 L2494.0 1171.1 L2495.7 1171.3 L2497.4 1170.3 L2499.0 1169.4 L2500.7 1170.7 L2502.4 1171.3 L2504.1 1170.4 L2505.7 1170.8 L2507.4 1171.1 L2509.1 1170.4 L2510.7 1170.3 L2512.4 1170.2 L2514.1 1170.0 L2515.8 1171.4 L2517.4 1171.8 L2519.1 1170.1 L2520.8 1169.8 L2522.5 1170.6 L2523.3 1171.0 L2524.5 550.0 L2525.3 768.0 L2528.5 633.0 L2529.5 640.0 L2531.0 708.0 L2532.5 465.0 L2535.0 468.0 L2538.4 459.0 L2539.0 524.0 L2541.0 396.5 L2544.0 475.7 L2546.2 357.0 L2548.0 413.0 L2549.4 323.8 L2551.0 504.0 L2552.7 388.7 L2554.0 456.0 L2556.6 407.0 L2559.2 497.8 L2562.3 394.0 L2564.4 365.0 L2567.0 333.6 L2570.0 462.7 L2572.2 347.7 L2575.3 431.6 L2577.4 448.4 L2580.0 354.4 L2582.0 448.4 L2585.2 333.6 L2587.3 440.6 L2589.6 388.7 L2592.2 379.6 L2595.0 614.7 L2598.2 416.8 L2600.3 525.0 L2602.0 407.7 L2607.0 766.6 L2608.5 474.0 L2609.9 514.7 L2613.0 405.6 L2615.0 673.0 L2618.2 469.0 L2620.0 817.5 L2621.0 364.0 L2623.0 751.0 L2626.0 444.5 L2628.0 801.0 L2631.2 419.4 L2633.8 518.6 L2638.2 400.4 L2642.9 713.0 L2647.3 375.2 L2648.8 650.5 L2651.2 334.7 L2654.3 647.4 L2655.8 557.5 L2657.0 596.0 L2659.0 403.5 L2661.6 513.4 L2662.3 492.6 L2664.4 526.9 L2667.0 345.3 L2669.4 452.3 L2670.0 396.5 L2672.0 499.0 L2674.0 384.8 L2675.0 747.0 L2677.4 478.3 L2679.2 562.7 L2680.5 405.6 L2683.9 619.0 L2685.0 348.4 L2687.5 489.5 L2688.6 429.0 L2690.0 601.7 L2692.2 386.0 L2694.8 438.0 L2697.0 584.0 L2698.0 388.7 L2699.5 417.3 L2703.0 371.8 L2706.0 710.0 L2709.9 470.5 L2711.0 495.0 L2713.0 381.0 L2716.0 336.8 L2718.2 416.0 L2720.8 409.5 L2721.6 518.6 L2723.4 304.3 L2724.2 698.0 L2728.0 394.7 L2731.0 578.0 L2734.3 453.6 L2736.4 549.7 L2738.4 483.5 L2739.2 555.0 L2741.6 416.8 L2742.9 492.6 L2744.2 372.6 L2746.2 518.6 L2749.4 345.3 L2751.4 608.4 L2754.0 518.0 L2756.0 592.0 L2757.0 438.6 L2761.0 636.0 L2764.4 389.5 L2765.5 520.0 L2767.5 531.6 L2769.0 631.0 L2774.0 385.6 L2775.0 652.6 L2777.4 414.7 L2779.2 650.5 L2782.0 358.0 L2784.4 542.0 L2787.0 535.5 L2789.6 358.8 L2792.2 468.0 L2793.5 366.6 L2795.6 391.3 L2797.4 358.0 L2800.8 654.4 L2805.2 326.9 L2809.9 589.5 L2810.9 375.2 L2814.8 612.3 L2817.7 333.6 L2820.0 647.4 L2821.3 499.1 L2822.9 620.1 L2824.2 479.6 L2829.1 801.2 L2831.2 646.6 L2833.0 729.0 L2834.0 522.5 L2835.8 686.4 L2838.2 585.6 L2841.0 640.1 L2844.2 402.2 L2847.0 657.5 L2850.9 403.5 L2854.0 705.6 L2856.1 702.5 L2859.2 379.6 L2860.3 487.4 L2863.9 650.5 L2864.9 479.6 L2867.0 628.4 L2869.6 633.1 L2874.0 404.3 L2874.8 598.1 L2877.4 408.7 L2880.5 623.2 L2881.8 597.3 L2883.1 831.0 L2885.2 461.4 L2887.0 675.2 L2890.1 443.8 L2892.2 605.8 L2893.0 425.1 L2895.6 414.7 L2897.1 359.6 L2898.2 560.1 L2900.0 435.5 L2901.3 847.9 L2904.7 433.6 L2906.0 430.3 L2908.1 360.6 L2910.1 556.2 L2911.7 488.7 L2915.1 797.3 L2916.1 393.9 L2917.9 758.3 L2919.0 359.6 L2920.8 439.4 L2922.6 369.7 L2924.2 484.8 L2926.0 421.2 L2929.0 865.0 L2931.2 383.5 L2933.0 857.0 L2934.0 361.9 L2935.8 561.4 L2937.1 405.6 L2940.3 543.2 L2942.1 340.6 L2944.2 962.0 L2946.2 444.5 L2948.8 756.2 L2950.6 438.6 L2952.2 796.5 L2954.3 381.4 L2956.9 824.0 L2960.0 354.4 L2962.1 456.2 L2964.2 436.8 L2965.2 451.0 L2967.5 545.8 L2968.8 488.7 L2970.1 741.4 L2973.8 391.3 L2975.1 644.8 L2977.1 493.9 L2977.9 708.4 L2980.0 386.6 L2981.3 431.6 L2983.1 384.8 L2986.8 755.7 L2988.1 416.5 L2990.4 422.5 L2995.1 664.3 L2997.9 429.7 L2999.5 464.0 L3001.0 426.4 L3002.9 486.1 L3005.2 356.8 L3008.1 499.9 L3009.9 395.2 L3013.0 340.6 L3017.7 734.4 L3020.8 355.5 L3022.1 414.7 L3023.9 457.5 L3026.0 589.0 L3028.1 424.5 L3029.4 449.0 L3031.2 372.6 L3032.5 397.8 L3034.3 363.5 L3035.8 406.9 L3037.1 300.4 L3039.2 427.7 L3041.3 392.6 L3042.1 716.8 L3046.0 402.2 L3048.8 454.9 L3050.9 426.4 L3052.3 1263.0 L3057.1 356.8 L3059.7 1245.0 L3061.8 1205.0 L3062.7 1234.0 L3064.0 1255.0 L3065.3 1214.0 L3067.2 1239.0 L3069.0 924.0 L3070.0 1217.0 L3072.0 1155.0 L3074.2 1188.0 L3077.2 1219.0 L3080.0 1186.0 L3081.8 892.0 L3083.0 1234.0 L3084.4 850.0 L3085.6 570.0 L3087.8 400.4 L3089.6 475.7 L3091.4 384.8 L3095.1 475.7 L3096.1 353.6 L3097.7 416.0 L3099.5 351.6 L3101.2 521.2 L3105.1 386.1 L3107.7 373.6 L3110.0 482.2 L3111.3 416.0 L3113.9 437.5 L3116.0 349.7 L3121.2 509.5 L3123.0 380.4 L3124.5 419.1 L3126.4 395.2 L3129.0 509.5 L3131.0 380.4 L3132.1 777.3 L3136.2 422.5 L3139.4 486.1 L3142.5 421.7 L3144.0 673.4 L3147.1 417.8 L3150.0 743.5 L3151.8 499.9 L3154.2 830.3 L3154.9 447.1 L3157.0 571.3 L3160.1 430.8 L3164.0 696.5 L3167.1 475.7 L3168.4 519.1 L3170.0 513.4 L3172.6 399.1 L3175.2 396.5 L3176.5 447.1 L3178.3 375.2 L3180.4 536.2 L3183.0 422.5 L3185.1 459.4 L3186.9 425.1 L3188.2 540.6 L3190.0 391.3 L3191.8 441.9 L3193.4 392.6 L3196.0 510.3 L3198.1 464.5 L3200.1 510.3 L3205.1 319.4 L3206.4 382.2 L3207.7 345.8 L3209.5 373.1 L3211.0 322.5 L3213.2 1111.6 L3216.0 938.5 L3217.4 1000.6 L3218.8 969.3 L3220.6 997.0 L3223.2 1000.6 L3224.3 955.4 L3226.0 985.6 L3229.0 919.4 L3231.3 930.0 L3234.0 1000.0 L3236.2 942.6 L3239.0 1035.5 L3243.0 932.0 L3244.0 968.0 L3245.3 419.1 L3246.6 509.5 L3249.0 380.4 L3250.3 503.5 L3252.3 401.7 L3254.2 391.3 L3255.2 464.0 L3257.0 388.2 L3260.1 445.8 L3264.0 604.3 L3265.3 394.4 L3268.2 457.5 L3270.0 430.3 L3271.8 486.1 L3273.4 408.2 L3277.0 626.6 L3278.1 419.1 L3279.9 1238.5 L3284.6 1235.0 L3285.5 1239.4 L3286.9 1235.6 L3287.5 1239.1 L3289.3 1235.3 L3291.6 1240.8 L3295.1 1237.6 L3298.6 1242.0 L3302.7 1235.6 L3306.2 1240.5 L3310.9 1238.5 L3316.7 1237.3 L3320.8 1236.2 L3323.8 1239.7 L3330.2 1232.7 L3332.8 1234.4 L3334.9 1233.2 L3337.2 1238.5 L3339.5 1234.4 L3341.9 1241.4 L3343.9 1207.2 L3346.0 1238.5 L3350.6 1237.3 L3351.8 1240.8 L3354.1 1237.9 L3357.7 1243.5 L3360.6 1240.8 L3362.9 1235.6 L3368.2 1230.3 L3370.5 1236.7 L3372.3 1235.0 L3375.2 1229.4 L3378.1 1242.6 L3381.0 1239.7 L3386.9 1235.6 L3389.8 1233.8 L3391.0 1237.9 L3396.8 1233.2 L3399.4 1237.3"/></g>
<circle cx="3403.6" cy="1231.6" r="1.3" fill="#85bc71"/>
<path d="M3288.5 163V1273" stroke="#667f90" stroke-width="1" stroke-dasharray="3 2" fill="none" shape-rendering="crispEdges"/>
<path d="M101 1232.5H3404.5" stroke="#586c7a" stroke-width="1" stroke-dasharray="3 2" fill="none" shape-rendering="crispEdges"/>
<rect x="33" y="1309" width="15.2" height="4.3" rx="2.1" fill="#85bc71"/>
<clipPath id="lgc"><rect x="40" y="1290" width="200" height="31.9"/></clipPath>
<rect x="53.5" y="1297.7" width="71.9" height="40" fill="none" stroke="#4773d8" stroke-width="2.7" clip-path="url(#lgc)"/>
<g opacity="0.999"><text x="57.8" y="1314.7" font-size="13.95" fill="rgb(204,204,220)" textLength="63.8" lengthAdjust="spacing">Download</text></g>
<rect x="133.9" y="1309" width="15.2" height="4.3" rx="2.1" fill="#eccc40"/>
<g opacity="0.999"><text x="158.9" y="1314.7" font-size="13.95" fill="rgba(204,204,220,0.65)" textLength="45.7" lengthAdjust="spacing">Upload</text></g>
<rect x="3347.9" y="1308.8" width="16.3" height="4.3" rx="2.1" fill="#8ab8ff"/>
<g opacity="0.999"><text x="3373.7" y="1314.9" font-size="13.95" fill="rgba(204,204,220,0.65)" textLength="27.6" lengthAdjust="spacing">Ping</text></g>
<filter id="sh" x="-20%" y="-30%" width="140%" height="190%"><feDropShadow dx="0" dy="5" stdDeviation="5" flood-color="#000" flood-opacity="0.55"/></filter>
<rect x="3086" y="1243.2" width="192" height="59.7" rx="2.5" fill="#22252b" filter="url(#sh)"/>
<g opacity="0.999"><text x="3095.6" y="1265.9" font-size="13.95" fill="rgb(204,204,220)" textLength="138.6" lengthAdjust="spacing">2024-08-15 17:50:00</text></g>
<rect x="3095" y="1281" width="16" height="5.2" rx="2.6" fill="#85bc71"/>
<g opacity="0.999"><text x="3120.3" y="1286.6" font-size="13.95" fill="rgb(204,204,220)" textLength="63.8" lengthAdjust="spacing">Download</text></g>
<g opacity="0.999"><text x="3203.7" y="1286.6" font-size="13.95" fill="rgb(204,204,220)" textLength="64.8" lengthAdjust="spacing">33.2 Mb/s</text></g>
<text x="28.4" y="131.7" font-size="16.30" fill="rgb(204,204,220)" textLength="85.8" lengthAdjust="spacing" stroke="rgb(204,204,220)" stroke-width="0.2">Speed Test</text>
<rect x="3395" y="109.1" width="26.6" height="35.5" rx="2.5" fill="#25272d"/>
<circle cx="3409" cy="121.7" r="1.5" fill="rgba(204,204,220,0.88)"/>
<circle cx="3409" cy="127.0" r="1.5" fill="rgba(204,204,220,0.88)"/>
<circle cx="3409" cy="132.3" r="1.5" fill="rgba(204,204,220,0.88)"/>
<defs><linearGradient id="lg" gradientUnits="userSpaceOnUse" x1="0" y1="135" x2="0" y2="915"><stop offset="0" stop-color="#ec5c2e"/><stop offset="0.5" stop-color="#f5962f"/><stop offset="1" stop-color="#f6d330"/></linearGradient></defs>
<g transform="translate(12,4) scale(0.03525)">
<path d="M590 135 L662 212 L822 232 L840 335 C890 385 915 445 906 508 L888 512 C880 470 865 440 838 415 L856 595 L910 690 L792 748 L700 915 L610 848 L372 872 L350 722 L192 600 L300 472 L282 268 L470 250 Z" fill="url(#lg)"/>
<circle cx="627" cy="538" r="229" fill="#181b1f"/>
<path d="M890 660 C825 625 815 565 775 505 C745 462 702 447 655 447 C592 447 545 498 545 560 C545 620 585 662 628 662 C660 662 680 650 692 632" fill="none" stroke="url(#lg)" stroke-width="52" stroke-linecap="round"/>
</g>
<rect x="1301.5" y="4.5" width="848" height="35" rx="2.5" fill="#111217" stroke="rgba(204,204,220,0.2)" stroke-width="1"/>
<g fill="none" stroke="rgba(204,204,220,0.65)" stroke-width="1.5" stroke-linecap="round"><circle cx="1318.2" cy="21.2" r="6"/><path d="M1322.7 25.7L1326.4 29.2"/></g>
<text x="1333.3" y="27.0" font-size="16.30" fill="rgba(204,204,220,0.65)" textLength="147.7" lengthAdjust="spacing">Search or jump to...</text>
<g fill="none" stroke="rgba(204,204,220,0.65)" stroke-width="1.2"><rect x="2081.3" y="17.3" width="15.1" height="9.4" rx="2"/><path d="M2084 20.6h9.8M2084 23.6h1.4M2086.8 23.6h4.2M2092.4 23.6h1.4" stroke-width="1.2" stroke-dasharray="1.4 1.4"/><path d="M2086.6 23.7h4.6" stroke-width="1.3"/></g>
<text x="2102.9" y="25.0" font-size="13.95" fill="rgba(204,204,220,0.65)" textLength="37.2" lengthAdjust="spacing">ctrl+k</text>
<circle cx="3302.2" cy="22.3" r="7.7" fill="none" stroke="rgba(204,204,220,0.65)" stroke-width="1.45"/>
<text x="3302.3" y="26.3" font-size="11" font-weight="bold" text-anchor="middle" fill="rgba(204,204,220,0.65)">?</text>
<g fill="none" stroke="rgba(204,204,220,0.65)" stroke-width="1.5" stroke-linecap="round"><circle cx="3341" cy="28.4" r="1.8" stroke-width="1.3"/><path d="M3340.6 22.8A7.2 7.2 0 0 1 3346.4 28.9"/><path d="M3340.6 19.1A10.9 10.9 0 0 1 3350 29"/><path d="M3340.8 15.6A14.4 14.4 0 0 1 3353.6 29"/></g>
<text x="3372.0" y="26.9" font-size="16.30" fill="rgb(204,204,220)" textLength="50.1" lengthAdjust="spacing">Sign in</text>
<path d="M21.2 61.9H41.8M21.2 67.6H41.8M21.2 73.3H41.8" stroke="rgb(204,204,220)" stroke-width="2.4" stroke-linecap="round" fill="none"/>
<text x="63.4" y="71.5" font-size="16.30" fill="rgb(204,204,220)" textLength="43.9" lengthAdjust="spacing">Home</text>
<text x="135.1" y="71.5" font-size="16.30" fill="rgb(204,204,220)" textLength="90.2" lengthAdjust="spacing">Dashboards</text>
<text x="253.6" y="71.5" font-size="16.30" fill="rgb(204,204,220)" textLength="58.0" lengthAdjust="spacing">Lexicon</text>
<text x="339.7" y="71.5" font-size="16.30" fill="rgba(204,204,220,0.65)" textLength="82.7" lengthAdjust="spacing">View panel</text>
<path d="M119.2 63.9L122.5 67L119.2 70.2" fill="none" stroke="rgba(204,204,220,0.65)" stroke-width="1.5" stroke-linecap="round" stroke-linejoin="round"/>
<path d="M238.0 63.9L241.3 67L238.0 70.2" fill="none" stroke="rgba(204,204,220,0.65)" stroke-width="1.5" stroke-linecap="round" stroke-linejoin="round"/>
<path d="M323.9 63.9L327.2 67L323.9 70.2" fill="none" stroke="rgba(204,204,220,0.65)" stroke-width="1.5" stroke-linecap="round" stroke-linejoin="round"/>
<rect x="2986" y="54" width="56" height="27" rx="2.5" fill="#4773d8"/>
<text x="2995.2" y="70.7" font-size="13.95" fill="#ffffff" textLength="37.0" lengthAdjust="spacing" stroke="#fff" stroke-width="0.3">Share</text>
<path d="M3051.5 54V81M3384.5 54V81" stroke="rgba(204,204,220,0.2)" stroke-width="1" shape-rendering="crispEdges"/>
<g fill="none" stroke="rgba(204,204,220,0.65)" stroke-width="1.5" stroke-linecap="round" stroke-linejoin="round"><circle cx="3081.1" cy="67" r="7.6"/><path d="M3081.1 63.2V67.8H3077.6"/></g>
<text x="3100.7" y="71.9" font-size="16.30" fill="rgba(204,204,220,0.65)" textLength="85.9" lengthAdjust="spacing">Last 7 days</text>
<path d="M3203.5 65.4L3207.0 68.7L3210.5 65.4" fill="none" stroke="rgba(204,204,220,0.65)" stroke-width="1.5" stroke-linecap="round" stroke-linejoin="round"/>
<path d="M3352.4 65.4L3355.9 68.7L3359.4 65.4" fill="none" stroke="rgba(204,204,220,0.65)" stroke-width="1.5" stroke-linecap="round" stroke-linejoin="round"/>
<g fill="none" stroke="rgba(204,204,220,0.65)" stroke-width="1.5" stroke-linecap="round"><circle cx="3244.3" cy="66.5" r="6.7"/><path d="M3249.3 71.4L3253.3 75M3240.7 66.2H3248"/></g>
<g fill="none" stroke="rgba(204,204,220,0.65)" stroke-width="1.5" stroke-linecap="round" stroke-linejoin="round"><path d="M3288.7 63.8A7.4 7.4 0 0 1 3302.4 66M3288 59.7V63.9H3292.3"/><path d="M3301.5 71.2A7.4 7.4 0 0 1 3287.8 69M3302.6 75.5V71.2H3298.3"/></g>
<text x="3324.4" y="71.7" font-size="16.30" fill="rgba(204,204,220,0.65)" textLength="17.5" lengthAdjust="spacing">5s</text>
<path d="M3408.9 70.2L3413.7 65.4L3418.5 70.2" fill="none" stroke="rgba(204,204,220,0.65)" stroke-width="2" stroke-linecap="round" stroke-linejoin="round"/>
</svg>
</body>
</html>
